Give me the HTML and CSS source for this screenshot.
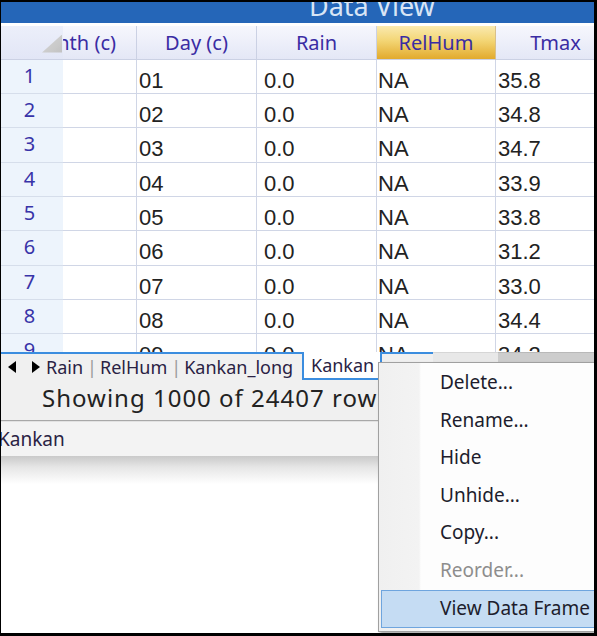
FILE: index.html
```html
<!DOCTYPE html>
<html>
<head>
<meta charset="utf-8">
<link rel="stylesheet" href="styles.css">
</head>
<body>
<div class="frame">
  <div class="titlebar"><span class="title">Data View</span></div>
  <div class="gap"></div>
  <div class="grid">
    <div class="row head">
      <div class="rh corner"><span class="tri"></span></div>
      <div class="c month"><span class="mi">Month (c)</span></div>
      <div class="c day">Day (c)</div>
      <div class="c rain">Rain</div>
      <div class="c relhum sel">RelHum</div>
      <div class="c tmax">Tmax</div>
    </div>
    <div class="row"><div class="rh">1</div><div class="c month"></div><div class="c day">01</div><div class="c rain">0.0</div><div class="c relhum">NA</div><div class="c tmax">35.8</div></div>
    <div class="row"><div class="rh">2</div><div class="c month"></div><div class="c day">02</div><div class="c rain">0.0</div><div class="c relhum">NA</div><div class="c tmax">34.8</div></div>
    <div class="row"><div class="rh">3</div><div class="c month"></div><div class="c day">03</div><div class="c rain">0.0</div><div class="c relhum">NA</div><div class="c tmax">34.7</div></div>
    <div class="row"><div class="rh">4</div><div class="c month"></div><div class="c day">04</div><div class="c rain">0.0</div><div class="c relhum">NA</div><div class="c tmax">33.9</div></div>
    <div class="row"><div class="rh">5</div><div class="c month"></div><div class="c day">05</div><div class="c rain">0.0</div><div class="c relhum">NA</div><div class="c tmax">33.8</div></div>
    <div class="row"><div class="rh">6</div><div class="c month"></div><div class="c day">06</div><div class="c rain">0.0</div><div class="c relhum">NA</div><div class="c tmax">31.2</div></div>
    <div class="row"><div class="rh">7</div><div class="c month"></div><div class="c day">07</div><div class="c rain">0.0</div><div class="c relhum">NA</div><div class="c tmax">33.0</div></div>
    <div class="row"><div class="rh">8</div><div class="c month"></div><div class="c day">08</div><div class="c rain">0.0</div><div class="c relhum">NA</div><div class="c tmax">34.4</div></div>
    <div class="row"><div class="rh">9</div><div class="c month"></div><div class="c day">09</div><div class="c rain">0.0</div><div class="c relhum">NA</div><div class="c tmax">34.2</div></div>
  </div>
  <div class="tabstrip">
    <div class="nav">
      <svg width="9" height="12" viewBox="0 0 9 12"><polygon points="8,0 8,12 0,6" fill="#000"/></svg>
      <svg width="9" height="12" viewBox="0 0 9 12"><polygon points="1,0 1,12 9,6" fill="#000"/></svg>
    </div>
    <div class="tabs">
      <span class="tab first">Rain</span><span class="sep">|</span><span class="tab">RelHum</span><span class="sep">|</span><span class="tab">Kankan_long</span>
    </div>
    <div class="tab active">Kankan</div>
    <div class="filler"></div>
    <div class="hscroll"><div class="track"></div><div class="thumb"></div></div>
  </div>
  <div class="status">Showing 1000 of 24407 rows</div>
  <div class="sheetbar">Kankan</div>
  <div class="shadow"></div>

  <div class="menu">
    <div class="item">Delete...</div>
    <div class="item">Rename...</div>
    <div class="item">Hide</div>
    <div class="item">Unhide...</div>
    <div class="item">Copy...</div>
    <div class="item disabled">Reorder...</div>
    <div class="item hot">View Data Frame</div>
  </div>
</div>
</body>
</html>
```

FILE: styles.css
```css
html, body {
  margin: 0;
  padding: 0;
  background: #fff;
}

.frame {
  width: 597px;
  height: 636px;
  box-sizing: border-box;
  border-style: solid;
  border-color: #000;
  border-width: 2px 3px 3px 1px;
  position: relative;
  overflow: hidden;
  background: #fff;
  font-family: "Noto Sans", sans-serif;
}

.titlebar {
  height: 21px;
  background: #2566b8;
  overflow: hidden;
  padding-left: 308px;
}

.title {
  display: block;
  font-size: 27px;
  line-height: 7px;
  color: #d9e5f5;
  white-space: nowrap;
}

.gap {
  height: 3px;
}

.grid {
  height: 326px;
  overflow: hidden;
}

.row {
  display: flex;
  height: 34.33px;
  box-sizing: border-box;
}

.row.head {
  height: 33.6px;
}

.rh {
  flex: 0 0 62px;
  box-sizing: border-box;
  background: #edf4fc;
  border-bottom: 1px solid #d6deeb;
  text-align: center;
  padding-right: 5px;
  padding-top: 2px;
  font-size: 20px;
  line-height: 27px;
  color: #3833a8;
}

.c {
  box-sizing: border-box;
  border-right: 1px solid #d0d6e6;
  border-bottom: 1px solid #d0d6e6;
  font-family: "Liberation Sans", Arial, sans-serif;
  font-size: 22px;
  line-height: 25px;
  padding-top: 8px;
  color: #222;
  white-space: nowrap;
  overflow: hidden;
}

.month { flex: 0 0 74px; }
.day { flex: 0 0 120px; padding-left: 2px; }
.rain { flex: 0 0 120px; padding-left: 7px; }
.relhum { flex: 0 0 119px; padding-left: 1px; }
.tmax { flex: 0 0 120px; padding-left: 2px; }

.head .rh,
.head .c {
  font-family: "Noto Sans", sans-serif;
  font-size: 20px;
  line-height: 27px;
  padding: 3px 0 0 0;
  text-align: center;
  color: #3a2ca3;
  background: linear-gradient(#f6f7fd, #e4e7f6);
  border-right: 1px solid #cbd1e4;
  border-bottom: 1px solid #cbd1e4;
}

.head .corner {
  background: linear-gradient(#eceffa, #e2e6f6);
  border-right: none;
  display: flex;
  justify-content: flex-end;
  align-items: flex-end;
  padding: 0 1px 6px 0;
}

.tri {
  width: 20px;
  height: 18px;
  background: linear-gradient(135deg, #d8d8d8, #c2c2c2);
  clip-path: polygon(100% 0, 100% 100%, 0 100%);
}

.head .month {
  display: flex;
  justify-content: flex-end;
}

.mi {
  flex: 0 0 auto;
  padding-right: 20px;
  white-space: nowrap;
}

.head .sel {
  background: linear-gradient(#faeab0, #f3d574 45%, #e2aa2c);
  border-right-color: #d9c08a;
}

/* tab strip */
.tabstrip {
  height: 30px;
  display: flex;
  background: #f0f0f0;
  font-size: 18px;
  color: #2a2244;
}

.nav,
.tabs,
.filler {
  border-top: 2px solid #3b8ddf;
  box-sizing: border-box;
}

.nav {
  flex: 0 0 43px;
  display: flex;
  align-items: center;
  gap: 14px;
  padding: 0 0 2px 7px;
}

.tabs {
  flex: 0 0 258px;
  display: flex;
  align-items: center;
  overflow: hidden;
  white-space: nowrap;
  padding-bottom: 2px;
  line-height: 24px;
}

.tab.first {
  margin-left: 2px;
}

.sep {
  color: #9a9a9a;
  margin: 0 3px 0 4px;
}

.tab.active {
  flex: 0 0 80px;
  height: 28px;
  box-sizing: border-box;
  background: #fff;
  border: 2px solid #3b8ddf;
  border-top: none;
  padding-left: 7px;
  line-height: 26px;
}

.filler {
  flex: 0 0 51px;
}

.hscroll {
  flex: 1;
  height: 10px;
  display: flex;
}

.track {
  flex: 0 0 65px;
  background: #e8e8e8;
  border-top: 1px solid #d6d6d6;
}

.thumb {
  flex: 1;
  background: #cdcdcd;
  border-top: 1px solid #b9b9b9;
}

.status {
  height: 38px;
  background: #f0f0f0;
  padding-left: 41px;
  font-size: 24px;
  letter-spacing: 1px;
  line-height: 31px;
  color: #222;
  white-space: nowrap;
  border-bottom: 1px solid #a8a8a8;
}

.sheetbar {
  height: 35px;
  box-sizing: border-box;
  background: #f3f3f3;
  padding-top: 4px;
  font-size: 19px;
  line-height: 26px;
  color: #2a2244;
  margin-left: -3px;
  border-top: 1px solid #e2e2e2;
}

.shadow {
  height: 28px;
  background: linear-gradient(#c9c9c9, #e6e6e6 40%, #fff);
}

/* context menu */
.menu {
  position: absolute;
  left: 377px;
  top: 360px;
  width: 230px;
  height: 270px;
  box-sizing: border-box;
  border: 1px solid #a0a0a0;
  background: linear-gradient(to right, #f0f0f0 0, #f3f3f3 40px, #fdfdfd 42px);
  box-shadow: 2px 2px 3px rgba(0, 0, 0, 0.35);
  padding-top: 1px;
  font-size: 19px;
  color: #201c2c;
}

.item {
  height: 37.5px;
  line-height: 37.5px;
  padding-left: 61px;
  white-space: nowrap;
}

.item.disabled {
  color: #8d8d8d;
}

.item.hot {
  margin: 1px 0 0 2px;
  height: 36px;
  line-height: 34px;
  padding-left: 58px;
  background: #c5dcf3;
  border: 1px solid #6fa5de;
}
```
